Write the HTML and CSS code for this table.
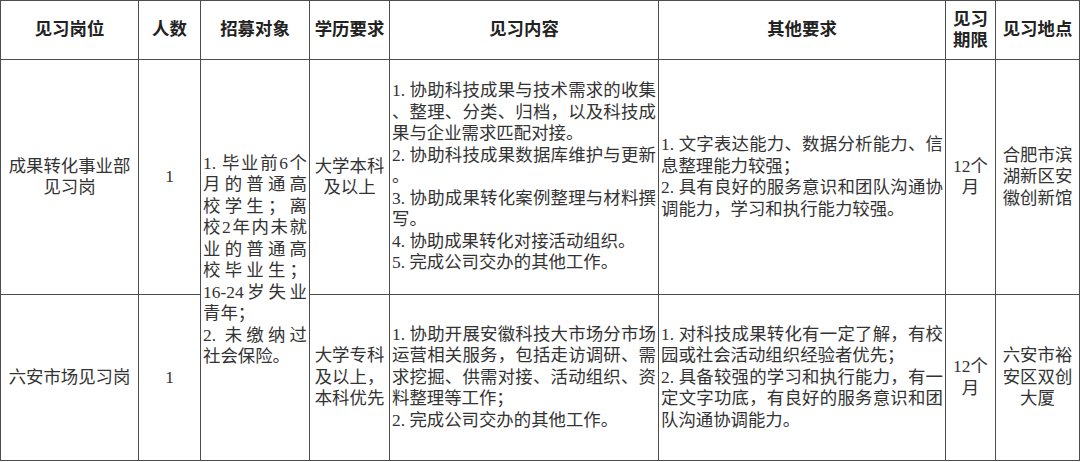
FILE: index.html
```html
<!DOCTYPE html>
<html lang="zh-CN">
<head>
<meta charset="utf-8">
<title>见习岗位</title>
<link rel="stylesheet" href="styles.css">
</head>
<body>
<table class="grid">
  <colgroup>
    <col class="c-post">
    <col class="c-num">
    <col class="c-target">
    <col class="c-edu">
    <col class="c-content">
    <col class="c-other">
    <col class="c-term">
    <col class="c-place">
  </colgroup>
  <thead>
    <tr class="row-head">
      <th>见习岗位</th>
      <th>人数</th>
      <th>招募对象</th>
      <th>学历要求</th>
      <th>见习内容</th>
      <th>其他要求</th>
      <th>见习<br>期限</th>
      <th>见习地点</th>
    </tr>
  </thead>
  <tbody>
    <tr class="row-1">
      <td class="center">成果转化事业部<br>见习岗</td>
      <td class="center">1</td>
      <td class="left target" rowspan="2">
        <div class="j">1. 毕业前6个</div>
        <div class="j">月的普通高</div>
        <div class="j">校学生；离</div>
        <div class="j">校2年内未就</div>
        <div class="j">业的普通高</div>
        <div class="j">校毕业生；</div>
        <div class="j">16-24岁失业</div>
        <div>青年；</div>
        <div class="j">2. 未缴纳过</div>
        <div>社会保险。</div>
      </td>
      <td class="center">大学本科<br>及以上</td>
      <td class="left">
        <div class="j">1. 协助科技成果与技术需求的收集</div>
        <div class="j">、整理、分类、归档，以及科技成</div>
        <div>果与企业需求匹配对接。</div>
        <div class="j">2. 协助科技成果数据库维护与更新</div>
        <div>。</div>
        <div class="j">3. 协助成果转化案例整理与材料撰</div>
        <div>写。</div>
        <div>4. 协助成果转化对接活动组织。</div>
        <div>5. 完成公司交办的其他工作。</div>
      </td>
      <td class="left">
        <div class="j">1. 文字表达能力、数据分析能力、信</div>
        <div>息整理能力较强；</div>
        <div class="j">2. 具有良好的服务意识和团队沟通协</div>
        <div>调能力，学习和执行能力较强。</div>
      </td>
      <td class="center">12个<br>月</td>
      <td class="center">合肥市滨<br>湖新区安<br>徽创新馆</td>
    </tr>
    <tr class="row-2">
      <td class="center">六安市场见习岗</td>
      <td class="center">1</td>
      <td class="center">大学专科<br>及以上，<br>本科优先</td>
      <td class="left">
        <div class="j">1. 协助开展安徽科技大市场分市场</div>
        <div class="j">运营相关服务，包括走访调研、需</div>
        <div class="j">求挖掘、供需对接、活动组织、资</div>
        <div>料整理等工作；</div>
        <div>2. 完成公司交办的其他工作。</div>
      </td>
      <td class="left">
        <div class="j">1. 对科技成果转化有一定了解，有校</div>
        <div>园或社会活动组织经验者优先；</div>
        <div class="j">2. 具备较强的学习和执行能力，有一</div>
        <div class="j">定文字功底，有良好的服务意识和团</div>
        <div>队沟通协调能力。</div>
      </td>
      <td class="center">12个<br>月</td>
      <td class="center">六安市裕<br>安区双创<br>大厦</td>
    </tr>
  </tbody>
</table>
</body>
</html>
```

FILE: styles.css
```css
html, body {
  margin: 0;
  padding: 0;
  background: #ffffff;
}

body {
  font-family: "Liberation Serif", "Noto Sans CJK SC", serif;
  font-size: 17.4px;
  line-height: 21.5px;
  color: #333333;
}

.grid {
  border-collapse: collapse;
  table-layout: fixed;
  width: 1079px;
  background: #ffffff;
}

.c-post { width: 138px; }
.c-num { width: 62px; }
.c-target { width: 109px; }
.c-edu { width: 80px; }
.c-content { width: 269px; }
.c-other { width: 287px; }
.c-term { width: 50px; }
.c-place { width: 84px; }

.grid th,
.grid td {
  border: 1px solid #4d4d4d;
  padding: 0 2px;
  vertical-align: middle;
}

.grid th {
  font-weight: bold;
  color: #222222;
  text-align: center;
}

.row-head { height: 59px; }
.row-1 { height: 235px; }
.row-2 { height: 166px; }

.center {
  text-align: center;
}

.left {
  text-align: left;
  padding-left: 3px;
}

.j {
  text-align: justify;
  text-align-last: justify;
}
```
